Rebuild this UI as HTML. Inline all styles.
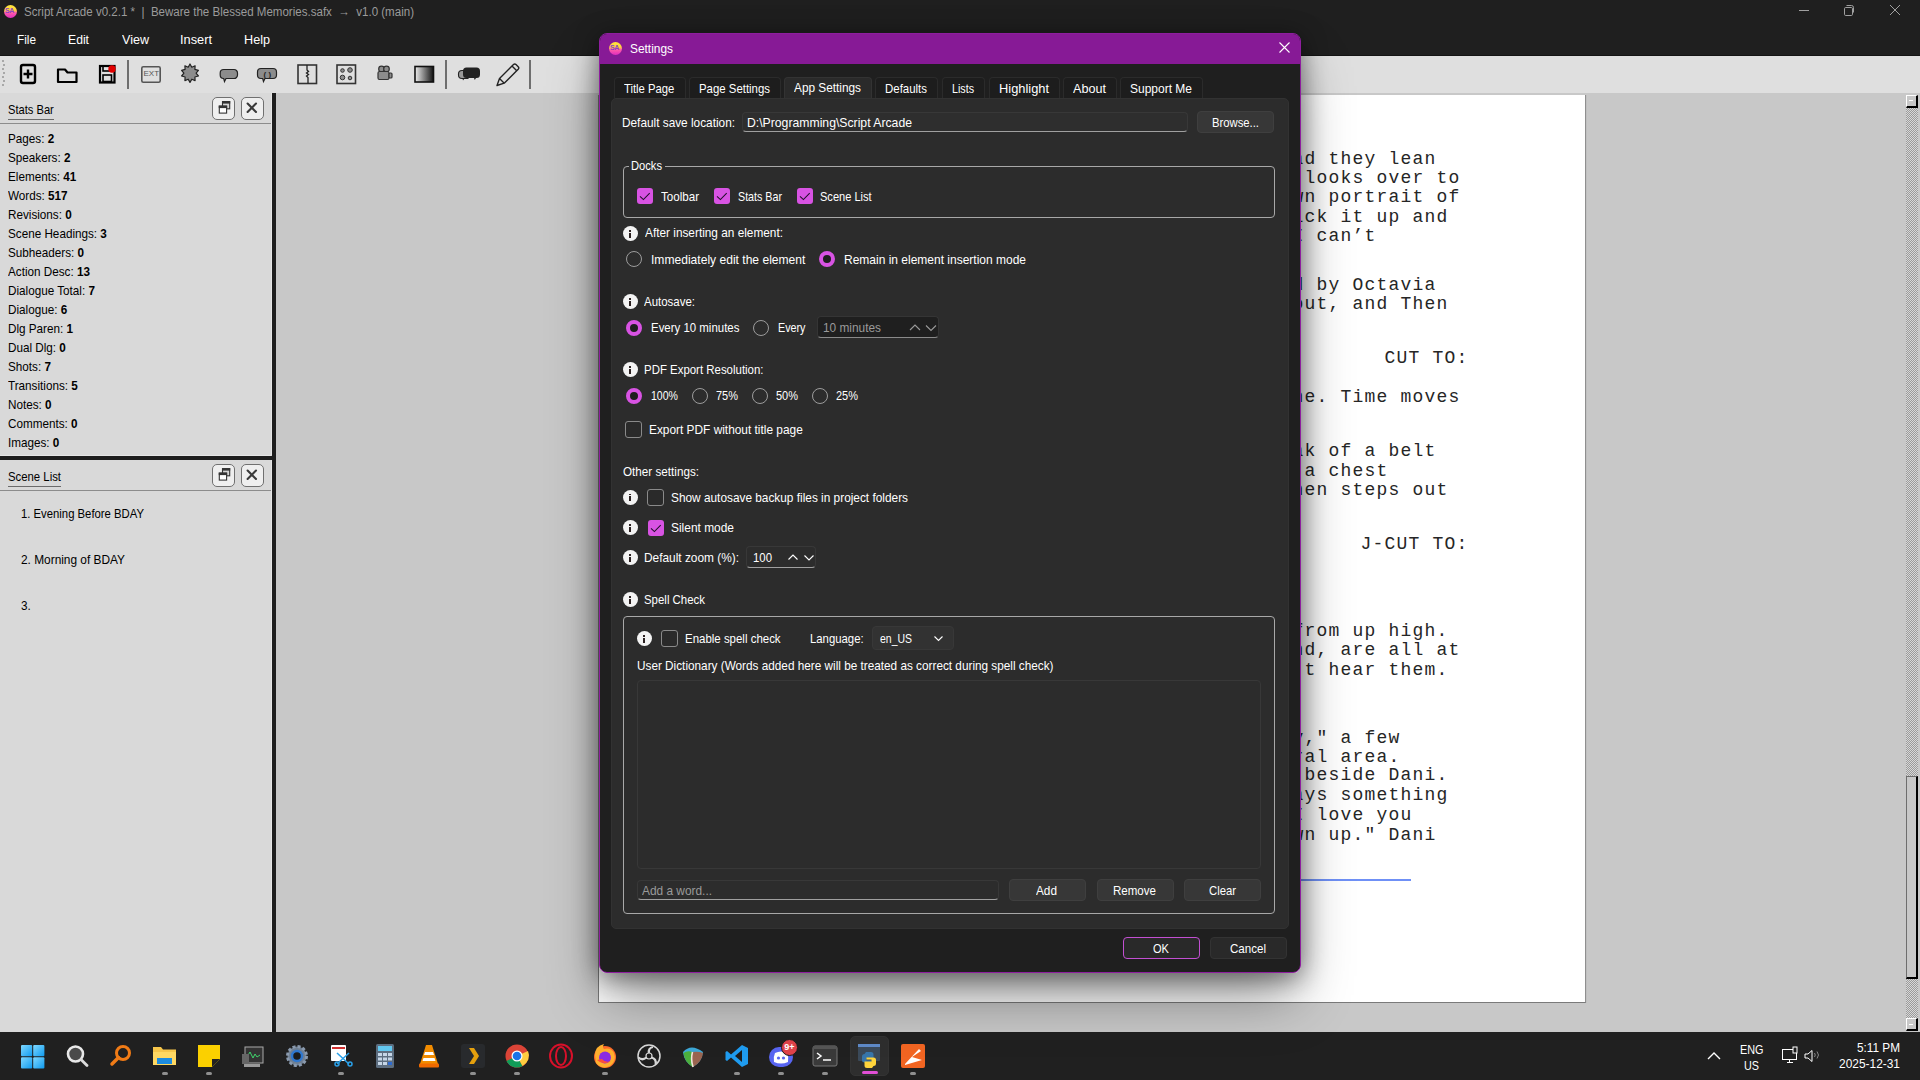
<!DOCTYPE html>
<html><head><meta charset="utf-8">
<style>
*{box-sizing:border-box;margin:0;padding:0}
html,body{width:1920px;height:1080px;overflow:hidden;background:#c8c8c8;font-family:"Liberation Sans",sans-serif;position:relative}
.a{position:absolute}
.t{position:absolute;white-space:pre;line-height:1.117;transform-origin:0 0}
.t b{font-weight:700}
svg{position:absolute;overflow:visible}
.dockbtn{position:absolute;width:23px;height:23px;background:#efefef;border:1px solid #707070;border-radius:5px}
.cb{position:absolute;width:16px;height:16px;border-radius:3px;background:#d853e3}
.cbo{position:absolute;width:17px;height:17px;border-radius:3px;border:1px solid #8a8a8a;background:#2a2a2a}
.rd{position:absolute;width:16px;height:16px;border-radius:50%;border:1px solid #9c9c9c}
.rdc{position:absolute;width:16px;height:16px;border-radius:50%;border:4px solid #d853e3;background:#1e1e1e}
.info{position:absolute;width:15px;height:15px;border-radius:50%;background:#f3f3f3}
.info:after{content:"";position:absolute;left:6.3px;top:6.6px;width:1.6px;height:5px;background:#2a2020}
.info:before{content:"";position:absolute;left:6px;top:4.4px;width:2.2px;height:1.3px;background:#2a2020}
.btn{position:absolute;background:#373737;border:1px solid #3f3f3f;border-radius:4px}
.edit{position:absolute;background:#2e2e2e;border:1px solid #383838;border-bottom:1px solid #a0a0a0;border-radius:4px}
.grp{position:absolute;border:1px solid #a8a8a8;border-radius:4px}
.tab{position:absolute;top:77px;height:21px;background:#1d1d1d;border:1px solid #2b2b2b;border-bottom:none;border-radius:4px 4px 0 0}
.tbi{position:absolute}
.dot{position:absolute;width:6px;height:3px;border-radius:2px;background:#8f8f8f;top:1072px}
</style></head>
<body>
<!-- Title + menu bar -->
<div class="a" style="left:0;top:0;width:1920px;height:56px;background:#1f1f1f"></div>
<div class="a" style="left:0;top:55px;width:1920px;height:1px;background:#141414"></div>
<!-- app icon -->
<div class="a" style="left:4px;top:5px;width:13px;height:13px;border-radius:50%;background:linear-gradient(#ffe83c 0%,#ffd040 40%,#ff5aa8 60%,#e02cc0 100%)"></div>
<div class="a" style="left:5px;top:8px;width:11px;height:6px;font:bold 7px 'Liberation Sans';color:#8a3fc8;line-height:6px;letter-spacing:-.5px">SA</div>
<!-- window controls -->
<svg style="left:1795px;top:3px" width="120" height="16">
 <line x1="4" y1="7.5" x2="14" y2="7.5" stroke="#a0a0a0" stroke-width="1"/>
 <rect x="49.5" y="4.5" width="8" height="8" rx="1.2" fill="none" stroke="#a0a0a0" stroke-width="1"/>
 <path d="M51.5 2.5 h5 a2 2 0 0 1 2 2 v5" fill="none" stroke="#a0a0a0" stroke-width="1"/>
 <path d="M95 2 L105 12 M105 2 L95 12" stroke="#a0a0a0" stroke-width="1"/>
</svg>

<!-- Toolbar -->
<div class="a" style="left:0;top:56px;width:1920px;height:37px;background:#dfdfdf"></div>
<svg style="left:0;top:56px" width="560" height="37">
 <g fill="#a8a8a8"><rect x="2" y="4" width="2" height="2"/><rect x="3" y="8" width="2" height="2"/><rect x="2" y="12" width="2" height="2"/><rect x="3" y="16" width="2" height="2"/><rect x="2" y="20" width="2" height="2"/><rect x="3" y="24" width="2" height="2"/><rect x="2" y="28" width="2" height="2"/></g>
 <!-- new -->
 <rect x="21" y="9" width="14" height="18" rx="2" fill="none" stroke="#000" stroke-width="2.4"/>
 <path d="M28 13.5v9M23.5 18h9" stroke="#000" stroke-width="2.4"/>
 <!-- open -->
 <path d="M58 13.5 h7 l2.5 3 h9 v9.5 h-18.5z" fill="none" stroke="#000" stroke-width="2.2" stroke-linejoin="round"/>
 <!-- save -->
 <rect x="100" y="10" width="14.5" height="16.5" fill="none" stroke="#000" stroke-width="2.2"/>
 <rect x="103" y="10" width="8" height="5" fill="none" stroke="#000" stroke-width="1.6"/>
 <rect x="103" y="19" width="8.5" height="6.5" fill="none" stroke="#000" stroke-width="1.6"/>
 <circle cx="112" cy="13" r="3.7" fill="#e00000"/>
 <!-- sep -->
 <rect x="127" y="4" width="2" height="29" fill="#6e6e6e"/>
 <!-- EXT -->
 <rect x="141.8" y="10.8" width="18.4" height="15.4" rx="1.5" fill="none" stroke="#555" stroke-width="1.6"/>
 <text x="143.5" y="19.5" font-family="Liberation Sans" font-size="8" fill="#555">EXT</text>
 <!-- starburst -->
 <path d="M190 8 l1.8 3.2 3.3-1.4 -.2 3.6 3.5 1 -2.3 2.8 2.3 2.8 -3.5 1 .2 3.6 -3.3-1.4 -1.8 3.2 -1.8-3.2 -3.3 1.4 .2-3.6 -3.5-1 2.3-2.8 -2.3-2.8 3.5-1 -.2-3.6 3.3 1.4z" fill="#8c8c8c" stroke="#222" stroke-width="1.2" stroke-linejoin="round"/>
 <!-- bubble -->
 <path d="M224 13.5 h10 a3.5 3.5 0 0 1 3.5 3.5 v2 a3.5 3.5 0 0 1 -3.5 3.5 h-8 l-1.5 3 -.8-3 h-.2 a3.5 3.5 0 0 1 -3.3-3.5 v-2 a3.5 3.5 0 0 1 3.5-3.5z" fill="#8c8c8c" stroke="#222" stroke-width="1.2"/>
 <!-- bubble () -->
 <path d="M261 12.5 h12 a3.5 3.5 0 0 1 3.5 3.5 v3 a3.5 3.5 0 0 1 -3.5 3.5 h-8 l-1.5 3 -.8-3 h-1.7 a3.5 3.5 0 0 1 -3.5-3.5 v-3 a3.5 3.5 0 0 1 3.5-3.5z" fill="#8c8c8c" stroke="#222" stroke-width="1.2"/>
 <text x="263.5" y="20.5" font-family="Liberation Sans" font-size="8" font-weight="bold" fill="#222">( )</text>
 <!-- split -->
 <rect x="298" y="9" width="18.5" height="18.5" fill="none" stroke="#333" stroke-width="1.6"/>
 <path d="M307 9 v5 l1.5 1.5 -2 1.5 2 1.5 -2 1.5 1.5 1.5 v6" fill="none" stroke="#222" stroke-width="1.3"/>
 <!-- dots -->
 <rect x="337" y="9" width="18.5" height="18.5" fill="none" stroke="#333" stroke-width="1.6"/>
 <circle cx="342.5" cy="14.5" r="1.8" fill="#8c8c8c" stroke="#333" stroke-width="1"/>
 <circle cx="350" cy="14" r="2.3" fill="#8c8c8c" stroke="#333" stroke-width="1"/>
 <circle cx="342.5" cy="21.5" r="2.3" fill="#8c8c8c" stroke="#333" stroke-width="1"/>
 <circle cx="350" cy="22" r="1.8" fill="#8c8c8c" stroke="#333" stroke-width="1"/>
 <!-- camera -->
 <circle cx="381.5" cy="13" r="2.8" fill="#8c8c8c" stroke="#333" stroke-width="1.2"/>
 <circle cx="386.5" cy="13" r="2.8" fill="#8c8c8c" stroke="#333" stroke-width="1.2"/>
 <rect x="378" y="15.5" width="11" height="8" rx="1.5" fill="#8c8c8c" stroke="#333" stroke-width="1.2"/>
 <rect x="389" y="17" width="3" height="5" rx="1" fill="#8c8c8c" stroke="#333" stroke-width="1.2"/>
 <!-- gradient -->
 <defs><linearGradient id="gr" x1="0" x2="1"><stop offset="0" stop-color="#eee"/><stop offset="1" stop-color="#111"/></linearGradient></defs>
 <rect x="415" y="10.5" width="18.5" height="15.5" fill="url(#gr)" stroke="#111" stroke-width="1.6"/>
 <!-- sep -->
 <rect x="445" y="4" width="2" height="29" fill="#6e6e6e"/>
 <!-- double bubble -->
 <path d="M462 14.5 h6 v8 h-6 a3.5 3.5 0 0 1 -3.5-3.5 v-1 a3.5 3.5 0 0 1 3.5-3.5z" fill="#9a9a9a" stroke="#222" stroke-width="1.1"/>
 <path d="M466.5 11.5 h10 a3.5 3.5 0 0 1 3.5 3.5 v3.5 a3.5 3.5 0 0 1 -3.5 3.5 h-10 a3.5 3.5 0 0 1 -3.5-3.5 v-3.5 a3.5 3.5 0 0 1 3.5-3.5z" fill="#222"/>
 <path d="M462.5 22.5 l.5 2 1.5-2z M474 22 l.8 2 1.2-2z" fill="#222"/>
 <!-- pencil -->
 <path d="M497 29.5 l2.5-7 14-14 a1.8 1.8 0 0 1 2.5 0 l2.2 2.2 a1.8 1.8 0 0 1 0 2.5 l-14 14z M499.5 22.5 l4.5 4.5 M512 10 l4.5 4.5" fill="none" stroke="#222" stroke-width="1.4" stroke-linejoin="round"/>
 <!-- sep -->
 <rect x="529" y="4" width="2" height="29" fill="#6e6e6e"/>
</svg>

<!-- Center area + page -->
<div class="a" style="left:598px;top:95px;width:988px;height:908px;background:#fff;border-left:1px solid #7a7a7a;border-bottom:1px solid #7a7a7a;border-right:1px solid #8f8f8f"></div>
<div class="a" style="left:1586px;top:95px;width:1px;height:908px;background:#c0c0c0"></div>
<div class="t" style="left:1292.6px;top:149.00px;font-size:18.00px;color:#262626;font-family:&quot;Liberation Mono&quot;, monospace;letter-spacing:1.2px">ad they lean</div>
<div class="t" style="left:1292.6px;top:168.00px;font-size:18.00px;color:#262626;font-family:&quot;Liberation Mono&quot;, monospace;letter-spacing:1.2px"> looks over to</div>
<div class="t" style="left:1292.6px;top:187.00px;font-size:18.00px;color:#262626;font-family:&quot;Liberation Mono&quot;, monospace;letter-spacing:1.2px">wn portrait of</div>
<div class="t" style="left:1292.6px;top:207.00px;font-size:18.00px;color:#262626;font-family:&quot;Liberation Mono&quot;, monospace;letter-spacing:1.2px">ick it up and</div>
<div class="t" style="left:1292.6px;top:226.00px;font-size:18.00px;color:#262626;font-family:&quot;Liberation Mono&quot;, monospace;letter-spacing:1.2px">I can’t</div>
<div class="t" style="left:1292.6px;top:275.00px;font-size:18.00px;color:#262626;font-family:&quot;Liberation Mono&quot;, monospace;letter-spacing:1.2px">d by Octavia</div>
<div class="t" style="left:1292.6px;top:294.00px;font-size:18.00px;color:#262626;font-family:&quot;Liberation Mono&quot;, monospace;letter-spacing:1.2px">out, and Then</div>
<div class="t" style="left:1292.6px;top:387.00px;font-size:18.00px;color:#262626;font-family:&quot;Liberation Mono&quot;, monospace;letter-spacing:1.2px">ne. Time moves</div>
<div class="t" style="left:1292.6px;top:441.00px;font-size:18.00px;color:#262626;font-family:&quot;Liberation Mono&quot;, monospace;letter-spacing:1.2px">ak of a belt</div>
<div class="t" style="left:1292.6px;top:461.00px;font-size:18.00px;color:#262626;font-family:&quot;Liberation Mono&quot;, monospace;letter-spacing:1.2px"> a chest</div>
<div class="t" style="left:1292.6px;top:480.00px;font-size:18.00px;color:#262626;font-family:&quot;Liberation Mono&quot;, monospace;letter-spacing:1.2px">hen steps out</div>
<div class="t" style="left:1292.6px;top:621.00px;font-size:18.00px;color:#262626;font-family:&quot;Liberation Mono&quot;, monospace;letter-spacing:1.2px">from up high.</div>
<div class="t" style="left:1292.6px;top:640.00px;font-size:18.00px;color:#262626;font-family:&quot;Liberation Mono&quot;, monospace;letter-spacing:1.2px">nd, are all at</div>
<div class="t" style="left:1292.6px;top:660.00px;font-size:18.00px;color:#262626;font-family:&quot;Liberation Mono&quot;, monospace;letter-spacing:1.2px">’t hear them.</div>
<div class="t" style="left:1292.6px;top:728.00px;font-size:18.00px;color:#262626;font-family:&quot;Liberation Mono&quot;, monospace;letter-spacing:1.2px">y,&quot; a few</div>
<div class="t" style="left:1292.6px;top:747.00px;font-size:18.00px;color:#262626;font-family:&quot;Liberation Mono&quot;, monospace;letter-spacing:1.2px">ral area.</div>
<div class="t" style="left:1292.6px;top:765.00px;font-size:18.00px;color:#262626;font-family:&quot;Liberation Mono&quot;, monospace;letter-spacing:1.2px"> beside Dani.</div>
<div class="t" style="left:1292.6px;top:785.00px;font-size:18.00px;color:#262626;font-family:&quot;Liberation Mono&quot;, monospace;letter-spacing:1.2px">ays something</div>
<div class="t" style="left:1292.6px;top:805.00px;font-size:18.00px;color:#262626;font-family:&quot;Liberation Mono&quot;, monospace;letter-spacing:1.2px">I love you</div>
<div class="t" style="left:1292.6px;top:825.00px;font-size:18.00px;color:#262626;font-family:&quot;Liberation Mono&quot;, monospace;letter-spacing:1.2px">wn up.&quot; Dani</div>
<div class="t" style="left:1384.6px;top:348.00px;font-size:18.00px;color:#262626;font-family:&quot;Liberation Mono&quot;, monospace;letter-spacing:1.2px">CUT TO:</div>
<div class="t" style="left:1360.6px;top:534.00px;font-size:18.00px;color:#262626;font-family:&quot;Liberation Mono&quot;, monospace;letter-spacing:1.2px">J-CUT TO:</div>
<div class="a" style="left:1300px;top:879px;width:111px;height:2px;background:#6f90f6"></div>
<!-- scrollbar -->
<div class="a" style="left:1906px;top:108px;width:12px;height:910px;background-image:repeating-conic-gradient(#9a9a9a 0 25%,#d8d8d8 0 50%);background-size:2px 2px"></div>
<div class="a" style="left:1906px;top:95px;width:12px;height:13px;background:#c8c8c8;border:1px solid #fff;border-right:2px solid #000;border-bottom:2px solid #000"></div>
<div class="a" style="left:1909px;top:100px;width:4px;height:1px;background:#fff"></div>
<div class="a" style="left:1906px;top:776px;width:12px;height:203px;background:#c8c8c8;border:1px solid #6e6e6e;border-right:2px solid #000;border-bottom:2px solid #000"></div>
<div class="a" style="left:1906px;top:1018px;width:12px;height:13px;background:#c8c8c8;border:1px solid #fff;border-right:2px solid #000;border-bottom:2px solid #000"></div>
<div class="a" style="left:1909px;top:1024px;width:4px;height:1px;background:#fff"></div>

<!-- Left dock -->
<div class="a" style="left:0;top:93px;width:272px;height:939px;background:#d9d9d9"></div>
<div class="a" style="left:8px;top:119px;width:46px;height:1px;background:#6a6a6a"></div>
<div class="a" style="left:0;top:123px;width:272px;height:1px;background:#8c8c8c"></div>
<div class="dockbtn" style="left:212px;top:97px"></div>
<div class="dockbtn" style="left:241px;top:97px"></div>
<svg style="left:212px;top:97px" width="60" height="24">
 <rect x="10.5" y="4.6" width="7.2" height="7.2" fill="#d4d4d4" stroke="#333" stroke-width="1.1"/>
 <rect x="10" y="4" width="8.2" height="2.6" fill="#333"/>
 <rect x="7.3" y="9.1" width="7.3" height="7" fill="#fff" stroke="#333" stroke-width="1.1"/>
 <rect x="6.75" y="8.6" width="8.4" height="2.5" fill="#333"/>
 <path d="M35.6 6.6 L44 15 M44 6.6 L35.6 15" stroke="#3a3a3a" stroke-width="2.1" stroke-linecap="round"/>
</svg>
<div class="a" style="left:0;top:456px;width:272px;height:4px;background:#1e1e1e"></div>
<div class="a" style="left:8px;top:486px;width:53px;height:1px;background:#6a6a6a"></div>
<div class="a" style="left:0;top:490px;width:272px;height:1px;background:#8c8c8c"></div>
<div class="dockbtn" style="left:212px;top:464px"></div>
<div class="dockbtn" style="left:241px;top:464px"></div>
<svg style="left:212px;top:464px" width="60" height="24">
 <rect x="10.5" y="4.6" width="7.2" height="7.2" fill="#d4d4d4" stroke="#333" stroke-width="1.1"/>
 <rect x="10" y="4" width="8.2" height="2.6" fill="#333"/>
 <rect x="7.3" y="9.1" width="7.3" height="7" fill="#fff" stroke="#333" stroke-width="1.1"/>
 <rect x="6.75" y="8.6" width="8.4" height="2.5" fill="#333"/>
 <path d="M35.6 6.6 L44 15 M44 6.6 L35.6 15" stroke="#3a3a3a" stroke-width="2.1" stroke-linecap="round"/>
</svg>
<div class="a" style="left:271px;top:93px;width:1px;height:362px;background:#e6e6e6"></div>
<div class="a" style="left:271px;top:460px;width:1px;height:572px;background:#e6e6e6"></div>
<div class="a" style="left:0;top:455px;width:271px;height:1px;background:#e6e6e6"></div>
<div class="a" style="left:272px;top:93px;width:4px;height:939px;background:#1e1e1e"></div>

<!-- Taskbar -->
<div class="a" style="left:0;top:1032px;width:1920px;height:48px;background:#202020"></div>
<svg style="left:21px;top:1045px" width="24" height="24"><defs><linearGradient id="ws" x1="0" y1="0" x2="1" y2="1"><stop offset="0" stop-color="#7fd8ff"/><stop offset="1" stop-color="#0f9bf0"/></linearGradient></defs><rect x="0" y="0" width="11.2" height="11.2" rx="1" fill="url(#ws)"/><rect x="12.2" y="0" width="11.2" height="11.2" rx="1" fill="url(#ws)"/><rect x="0" y="12.2" width="11.2" height="11.2" rx="1" fill="url(#ws)"/><rect x="12.2" y="12.2" width="11.2" height="11.2" rx="1" fill="url(#ws)"/></svg>
<svg style="left:66px;top:1045px" width="24" height="24"><circle cx="9.5" cy="9" r="7.5" fill="#4a4a4a" stroke="#e8e8e8" stroke-width="2.6"/><path d="M15 14.5 L21 20.5" stroke="#dcdcdc" stroke-width="2.8" stroke-linecap="round"/></svg>
<svg style="left:109px;top:1044px" width="24" height="24"><circle cx="14" cy="9" r="6.5" fill="none" stroke="#f07b16" stroke-width="3"/><path d="M9.5 13.5 L3 20" stroke="#f07b16" stroke-width="3.5" stroke-linecap="round"/></svg>
<svg style="left:152px;top:1044px" width="26" height="24"><path d="M1 3 h8 l2 2.5 h13 v15.5 h-23z" fill="#f7c64a"/><rect x="1" y="8" width="23" height="13" fill="#ffd862"/><rect x="5" y="14" width="15" height="6" fill="#1d8ce0"/></svg>
<svg style="left:197px;top:1044px" width="24" height="24"><path d="M1 1 h22 v14 l-8 8 h-14z" fill="#fbd000"/><path d="M23 15 l-8 8 v-8z" fill="#222"/></svg>
<svg style="left:241px;top:1045px" width="24" height="24"><rect x="4" y="2" width="18" height="16" fill="#333" stroke="#aaa" stroke-width="1"/><path d="M6 12 l3-5 3 6 2-4 2 3 3-2" fill="none" stroke="#3fd36b" stroke-width="1"/><rect x="1" y="9" width="7" height="10" fill="#666"/><rect x="3" y="19" width="16" height="3" fill="#999"/></svg>
<svg style="left:285px;top:1044px" width="24" height="24"><circle cx="12" cy="12" r="9.5" fill="#6f7f92" stroke="#8a9aae" stroke-width="3" stroke-dasharray="3 2"/><circle cx="12" cy="12" r="5" fill="#1c1c1c" stroke="#2f78d0" stroke-width="2.5"/></svg>
<svg style="left:329px;top:1044px" width="26" height="24"><rect x="2" y="1" width="15" height="16" rx="1" fill="#fff"/><rect x="3" y="3" width="13" height="2" fill="#d03030"/><path d="M8 9 L20 20 M20 9 L8 20" stroke="#2aa0e8" stroke-width="1.6"/><circle cx="8" cy="20" r="2" fill="none" stroke="#2aa0e8" stroke-width="1.5"/><circle cx="21" cy="20" r="2" fill="none" stroke="#2aa0e8" stroke-width="1.5"/></svg>
<svg style="left:375px;top:1044px" width="20" height="24"><rect x="1" y="0" width="18" height="24" rx="1.5" fill="#5d6e80"/><rect x="3" y="2" width="14" height="5" fill="#62c8f0"/><g fill="#c6d6e6"><rect x="3" y="9" width="4" height="3"/><rect x="8" y="9" width="4" height="3"/><rect x="13" y="9" width="4" height="3"/><rect x="3" y="13.5" width="4" height="3"/><rect x="8" y="13.5" width="4" height="3"/><rect x="13" y="13.5" width="4" height="3"/><rect x="3" y="18" width="4" height="3"/><rect x="8" y="18" width="4" height="3"/><rect x="13" y="18" width="4" height="3" fill="#2f6bd0"/></g></svg>
<svg style="left:417px;top:1044px" width="24" height="24"><path d="M9 1 h6 l6 19 h-18z" fill="#f28c00"/><path d="M8 8 h8 l1 3 h-10z M6.5 14 h11 l1 3 h-13z" fill="#fff"/><rect x="2" y="19.5" width="20" height="4" rx="1" fill="#f06a00"/></svg>
<svg style="left:461px;top:1044px" width="24" height="24"><rect x="0" y="0" width="24" height="24" rx="3" fill="#282a2d"/><path d="M8 4 h5 l5 8 -5 8 h-5 l5-8z" fill="#e5a00d"/></svg>
<svg style="left:505px;top:1044px" width="24" height="24"><circle cx="12" cy="12" r="11.5" fill="#db4437"/><path d="M12 12 L1.5 17 A11.5 11.5 0 0 0 17.5 22z" fill="#0f9d58"/><path d="M12 12 L17.5 22 A11.5 11.5 0 0 0 23 7z" fill="#ffcd40"/><circle cx="12" cy="12" r="5.5" fill="#fff"/><circle cx="12" cy="12" r="4.3" fill="#1a73e8"/></svg>
<svg style="left:549px;top:1044px" width="24" height="24"><ellipse cx="12" cy="12" rx="11" ry="11.5" fill="none" stroke="#d8102a" stroke-width="2"/><ellipse cx="12" cy="12" rx="5" ry="9" fill="none" stroke="#d8102a" stroke-width="2"/></svg>
<svg style="left:593px;top:1043px" width="24" height="26"><circle cx="12" cy="14" r="11" fill="#ff6a2b"/><path d="M2 12 q0-9 9-11 q-2 3 0 5 q7 -2 10 4 q3 8 -4 13 q-8 4 -14-3z" fill="#ffb02e"/><circle cx="12" cy="14.5" r="6" fill="#8a2be2"/><path d="M4 17 q6 6 14 1 q-6 2 -9-2z" fill="#ff4f3a"/></svg>
<svg style="left:637px;top:1044px" width="24" height="24"><circle cx="12" cy="12" r="11" fill="#1e1e1e" stroke="#d8d8d8" stroke-width="1.5"/><circle cx="12" cy="12" r="3" fill="none" stroke="#d8d8d8" stroke-width="1.2"/><path d="M12 9 q-1-5 4-6 M14.6 13.5 q5 1.5 4 6.5 M9.4 13.5 q-4 3.5 -8 0" fill="none" stroke="#d8d8d8" stroke-width="2.2"/></svg>
<svg style="left:681px;top:1044px" width="24" height="24"><path d="M2 8 q8-9 20 0 q-1 10 -10 15 q-9-5 -10-15z" fill="#3da9d8"/><path d="M2.5 9 q4-3 9-1 q-3 5 0 15 q-8-5 -9-14z" fill="#4caf3d"/><path d="M11.5 8 q6-1 10.5 1 q-1 9 -10 14 q-3-8 -0.5-15z" fill="#9a6550"/><path d="M11.5 8 q-2 7 0.5 15" stroke="#f0e6d8" stroke-width="1.6" fill="none"/></svg>
<svg style="left:725px;top:1044px" width="24" height="24"><path d="M17 1 L23 4 v16 L17 23 L6 13.5 L2 17 L0.5 16 v-8 L2 7 L6 10.5z" fill="#1f9cf0"/><path d="M17 6 v12 l-7-6z" fill="#1c1c1c"/></svg>
<svg style="left:769px;top:1045px" width="30" height="24"><rect x="0" y="2" width="24" height="20" rx="10" fill="#5865f2"/><path d="M6 8 q6-3 12 0 q2 4 1 9 q-7 3 -14 0 q-1-5 1-9z" fill="#fff"/><circle cx="9.5" cy="13" r="1.6" fill="#5865f2"/><circle cx="14.5" cy="13" r="1.6" fill="#5865f2"/></svg>
<div class="a" style="left:781px;top:1039px;width:17px;height:17px;border-radius:50%;background:#e0424a;border:1.5px solid #1c1c1c;font:bold 9px 'Liberation Sans';color:#fff;text-align:center;line-height:14px">9+</div>
<svg style="left:813px;top:1045px" width="24" height="22"><rect x="0" y="1" width="24" height="20" rx="2" fill="#3a3a3a" stroke="#777" stroke-width="1"/><rect x="0" y="1" width="24" height="3" fill="#555"/><path d="M4 8 l4 3 -4 3" fill="none" stroke="#fff" stroke-width="1.5"/><path d="M10 15 h8" stroke="#fff" stroke-width="1.5"/></svg>
<div class="a" style="left:850px;top:1036px;width:39px;height:40px;border-radius:5px;background:#2e2e2e;border:1px solid #333"></div>
<svg style="left:857px;top:1044px" width="24" height="24"><rect x="1" y="0" width="22" height="17" rx="1" fill="#3b4a5a"/><rect x="1" y="0" width="22" height="3" fill="#5f8ac8"/><path d="M9 8 h5 a2.5 2.5 0 0 1 2.5 2.5 v4 h-7 v2 h5 v2 h-7 a2.5 2.5 0 0 1 -2.5-2.5 v-3.5 a2.5 2.5 0 0 1 2.5-2.5z" fill="#3776ab"/><path d="M15 24 h-5 a2.5 2.5 0 0 1 -2.5-2.5 v-4 h7 v-2 h-5 v-2 h7 a2.5 2.5 0 0 1 2.5 2.5 v3.5 a2.5 2.5 0 0 1 -2.5 2.5z" fill="#ffd43b"/></svg>
<div class="a" style="left:862px;top:1071px;width:16px;height:3px;border-radius:2px;background:#e24fd6"></div>
<svg style="left:901px;top:1044px" width="24" height="24"><rect x="0" y="0" width="24" height="24" rx="2" fill="#f26522"/><path d="M4 20 L18 5 l2 2 -9 6 10 3 -17 5z" fill="#fff"/></svg>
<div class="dot" style="left:162px"></div>
<div class="dot" style="left:206px"></div>
<div class="dot" style="left:338px"></div>
<div class="dot" style="left:470px"></div>
<div class="dot" style="left:514px"></div>
<div class="dot" style="left:602px"></div>
<div class="dot" style="left:734px"></div>
<div class="dot" style="left:778px"></div>
<div class="dot" style="left:822px"></div>
<div class="dot" style="left:910px"></div>
<svg style="left:1706px;top:1050px" width="16" height="12"><path d="M2 9 L8 3 L14 9" fill="none" stroke="#fff" stroke-width="1.4"/></svg>
<svg style="left:1780px;top:1046px" width="46" height="20"><rect x="2.5" y="3.5" width="14" height="10" fill="none" stroke="#fff" stroke-width="1"/><path d="M7 16.5 h6 M9.5 13.5 v3" stroke="#fff" stroke-width="1"/><rect x="13" y="1" width="4" height="6" fill="#1c1c1c" stroke="#fff" stroke-width="1"/><path d="M25 8 h3 l4-3.5 v11 l-4-3.5 h-3z" fill="none" stroke="#fff" stroke-width="1"/><path d="M34.5 7 q1.5 2 0 4 M37 5.5 q3 3.5 0 7" fill="none" stroke="#888" stroke-width="1"/></svg>

<!-- Dialog -->
<div class="a" style="left:599px;top:33px;width:702px;height:940px;border-radius:8px;box-shadow:0 4px 26px 0 rgba(0,0,0,.48),0 28px 56px -6px rgba(0,0,0,.42)"></div>
<div class="a" style="left:599px;top:33px;width:702px;height:940px;background:#1f1f1f;border:1px solid #8e1e9e;border-radius:8px;overflow:hidden">
 <div class="a" style="left:0;top:0;width:700px;height:30px;background:#871a96"></div>
</div>
<!-- dialog icon + close -->
<div class="a" style="left:609px;top:42px;width:13px;height:13px;border-radius:50%;background:linear-gradient(#ffe83c 0%,#ffd040 40%,#ff5aa8 60%,#e02cc0 100%)"></div>
<div class="a" style="left:610px;top:45px;width:11px;height:6px;font:bold 7px 'Liberation Sans';color:#8a3fc8;line-height:6px;letter-spacing:-.5px">SA</div>
<svg style="left:1279px;top:42px" width="12" height="12"><path d="M.5 .5 L10.5 10.5 M10.5 .5 L.5 10.5" stroke="#fff" stroke-width="1.1"/></svg>

<!-- tabs -->
<div class="tab" style="left:613.5px;width:72px"></div>
<div class="tab" style="left:688.5px;width:92px"></div>
<div class="tab" style="left:783.5px;width:88px;background:#2a2a2a;border-color:#333"></div>
<div class="tab" style="left:874.5px;width:63.5px"></div>
<div class="tab" style="left:941.5px;width:43.5px"></div>
<div class="tab" style="left:988.5px;width:71px"></div>
<div class="tab" style="left:1062.5px;width:54px"></div>
<div class="tab" style="left:1119.5px;width:83px"></div>
<!-- tab pane -->
<div class="a" style="left:611px;top:98px;width:678px;height:831px;background:#2c2c2c;border:1px solid #323232;border-radius:5px"></div>

<div class="edit" style="left:742px;top:112px;width:446px;height:20px"></div>
<div class="btn" style="left:1197px;top:111px;width:77px;height:22px"></div>

<div class="grp" style="left:623px;top:166px;width:652px;height:52px"></div>
<div class="a" style="left:629px;top:160px;width:36px;height:10px;background:#2c2c2c"></div>
<div class="cb" style="left:637px;top:188px"></div><svg style="left:637px;top:188px" width="16" height="16"><path d="M3 8.3 L6.4 11.6 L12.7 5.2" fill="none" stroke="#20102a" stroke-width="1.05"/></svg>
<div class="cb" style="left:714px;top:188px"></div><svg style="left:714px;top:188px" width="16" height="16"><path d="M3 8.3 L6.4 11.6 L12.7 5.2" fill="none" stroke="#20102a" stroke-width="1.05"/></svg>
<div class="cb" style="left:797px;top:188px"></div><svg style="left:797px;top:188px" width="16" height="16"><path d="M3 8.3 L6.4 11.6 L12.7 5.2" fill="none" stroke="#20102a" stroke-width="1.05"/></svg>
<div class="info" style="left:623px;top:226px"></div>
<div class="rd" style="left:626px;top:251px"></div>
<div class="rdc" style="left:819px;top:251px"></div>
<div class="info" style="left:623px;top:294px"></div>
<div class="rdc" style="left:626px;top:319.5px"></div>
<div class="rd" style="left:753px;top:319.5px"></div>
<div class="a" style="left:817px;top:316px;width:122px;height:22px;background:#1f1f1f;border:1px solid #353535;border-bottom:1px solid #8a8a8a;border-radius:4px"></div>
<svg style="left:906px;top:322px" width="34" height="12"><path d="M4 8 L9 3 L14 8 M20 3.5 L25 8.5 L30 3.5" fill="none" stroke="#9a9a9a" stroke-width="1.1"/></svg>
<div class="info" style="left:623px;top:362px"></div>
<div class="rdc" style="left:626px;top:387.5px"></div>
<div class="rd" style="left:692px;top:387.5px"></div>
<div class="rd" style="left:752px;top:387.5px"></div>
<div class="rd" style="left:812px;top:387.5px"></div>
<div class="cbo" style="left:625px;top:421px"></div>
<div class="info" style="left:623px;top:489.5px"></div>
<div class="cbo" style="left:647px;top:489px"></div>
<div class="info" style="left:623px;top:520px"></div>
<div class="cb" style="left:648px;top:519.5px"></div><svg style="left:648px;top:519.5px" width="16" height="16"><path d="M3 8.3 L6.4 11.6 L12.7 5.2" fill="none" stroke="#20102a" stroke-width="1.05"/></svg>
<div class="info" style="left:623px;top:550px"></div>
<div class="edit" style="left:746px;top:546px;width:70px;height:22px;background:#2c2c2c"></div>
<svg style="left:786px;top:552px" width="30" height="10"><path d="M2.5 7.5 L7 3 L11.5 7.5 M18.5 3.5 L23 8 L27.5 3.5" fill="none" stroke="#fff" stroke-width="1.1"/></svg>
<div class="info" style="left:623px;top:592px"></div>
<div class="grp" style="left:623px;top:616px;width:652px;height:298px;"></div>
<div class="info" style="left:637px;top:631px"></div>
<div class="cbo" style="left:661px;top:630px"></div>
<div class="a" style="left:872px;top:626px;width:82px;height:24px;background:#323232;border:1px solid #383838;border-radius:4px"></div>
<svg style="left:933px;top:635px" width="12" height="8"><path d="M1.5 1.5 L5.5 5.5 L9.5 1.5" fill="none" stroke="#fff" stroke-width="1.1"/></svg>
<div class="a" style="left:637px;top:680px;width:624px;height:189px;background:#2c2c2c;border:1px solid #383838;border-radius:4px"></div>
<div class="edit" style="left:637px;top:880px;width:362px;height:20px;background:#2c2c2c"></div>
<div class="btn" style="left:1008.5px;top:879px;width:77px;height:22px;"></div>
<div class="btn" style="left:1096.5px;top:879px;width:77px;height:22px;"></div>
<div class="btn" style="left:1183.5px;top:879px;width:77px;height:22px;"></div>
<div class="a" style="left:1122.5px;top:937px;width:77.5px;height:22px;background:#292929;border:1px solid #c24fd2;border-radius:4px"></div>
<div class="a" style="left:1210px;top:937px;width:77px;height:22px;background:#292929;border:1px solid #333;border-radius:4px"></div>

<div class="t" style="left:24.0px;top:6.00px;font-size:12.50px;color:#9b9b9b;font-family:&quot;Liberation Sans&quot;, sans-serif;transform:scaleX(0.9238)">Script Arcade v0.2.1 *  |  Beware the Blessed Memories.safx  →  v1.0 (main)</div>
<div class="t" style="left:16.6px;top:33.00px;font-size:13.00px;color:#ffffff;font-family:&quot;Liberation Sans&quot;, sans-serif;transform:scaleX(0.9068)">File</div>
<div class="t" style="left:68.4px;top:33.00px;font-size:13.00px;color:#ffffff;font-family:&quot;Liberation Sans&quot;, sans-serif;transform:scaleX(0.9372)">Edit</div>
<div class="t" style="left:122.0px;top:33.00px;font-size:13.00px;color:#ffffff;font-family:&quot;Liberation Sans&quot;, sans-serif;transform:scaleX(0.9659)">View</div>
<div class="t" style="left:180.0px;top:33.00px;font-size:13.00px;color:#ffffff;font-family:&quot;Liberation Sans&quot;, sans-serif;transform:scaleX(0.9841)">Insert</div>
<div class="t" style="left:244.0px;top:33.00px;font-size:13.00px;color:#ffffff;font-family:&quot;Liberation Sans&quot;, sans-serif;transform:scaleX(0.9720)">Help</div>
<div class="t" style="left:8.1px;top:103.00px;font-size:13.00px;color:#000000;font-family:&quot;Liberation Sans&quot;, sans-serif;transform:scaleX(0.8566)">Stats Bar</div>
<div class="t" style="left:8.2px;top:132.00px;font-size:13.00px;color:#000000;font-family:&quot;Liberation Sans&quot;, sans-serif;transform:scaleX(0.9000)">Pages: <b>2</b></div>
<div class="t" style="left:8.2px;top:151.00px;font-size:13.00px;color:#000000;font-family:&quot;Liberation Sans&quot;, sans-serif;transform:scaleX(0.9000)">Speakers: <b>2</b></div>
<div class="t" style="left:8.2px;top:170.00px;font-size:13.00px;color:#000000;font-family:&quot;Liberation Sans&quot;, sans-serif;transform:scaleX(0.9000)">Elements: <b>41</b></div>
<div class="t" style="left:8.2px;top:189.00px;font-size:13.00px;color:#000000;font-family:&quot;Liberation Sans&quot;, sans-serif;transform:scaleX(0.9000)">Words: <b>517</b></div>
<div class="t" style="left:8.2px;top:208.00px;font-size:13.00px;color:#000000;font-family:&quot;Liberation Sans&quot;, sans-serif;transform:scaleX(0.9000)">Revisions: <b>0</b></div>
<div class="t" style="left:8.2px;top:227.00px;font-size:13.00px;color:#000000;font-family:&quot;Liberation Sans&quot;, sans-serif;transform:scaleX(0.9000)">Scene Headings: <b>3</b></div>
<div class="t" style="left:8.2px;top:246.00px;font-size:13.00px;color:#000000;font-family:&quot;Liberation Sans&quot;, sans-serif;transform:scaleX(0.9000)">Subheaders: <b>0</b></div>
<div class="t" style="left:8.2px;top:265.00px;font-size:13.00px;color:#000000;font-family:&quot;Liberation Sans&quot;, sans-serif;transform:scaleX(0.9000)">Action Desc: <b>13</b></div>
<div class="t" style="left:8.2px;top:284.00px;font-size:13.00px;color:#000000;font-family:&quot;Liberation Sans&quot;, sans-serif;transform:scaleX(0.9000)">Dialogue Total: <b>7</b></div>
<div class="t" style="left:8.2px;top:303.00px;font-size:13.00px;color:#000000;font-family:&quot;Liberation Sans&quot;, sans-serif;transform:scaleX(0.9000)">Dialogue: <b>6</b></div>
<div class="t" style="left:8.2px;top:322.00px;font-size:13.00px;color:#000000;font-family:&quot;Liberation Sans&quot;, sans-serif;transform:scaleX(0.9000)">Dlg Paren: <b>1</b></div>
<div class="t" style="left:8.2px;top:341.00px;font-size:13.00px;color:#000000;font-family:&quot;Liberation Sans&quot;, sans-serif;transform:scaleX(0.9000)">Dual Dlg: <b>0</b></div>
<div class="t" style="left:8.2px;top:360.00px;font-size:13.00px;color:#000000;font-family:&quot;Liberation Sans&quot;, sans-serif;transform:scaleX(0.9000)">Shots: <b>7</b></div>
<div class="t" style="left:8.2px;top:379.00px;font-size:13.00px;color:#000000;font-family:&quot;Liberation Sans&quot;, sans-serif;transform:scaleX(0.9000)">Transitions: <b>5</b></div>
<div class="t" style="left:8.2px;top:398.00px;font-size:13.00px;color:#000000;font-family:&quot;Liberation Sans&quot;, sans-serif;transform:scaleX(0.9000)">Notes: <b>0</b></div>
<div class="t" style="left:8.2px;top:417.00px;font-size:13.00px;color:#000000;font-family:&quot;Liberation Sans&quot;, sans-serif;transform:scaleX(0.9000)">Comments: <b>0</b></div>
<div class="t" style="left:8.2px;top:436.00px;font-size:13.00px;color:#000000;font-family:&quot;Liberation Sans&quot;, sans-serif;transform:scaleX(0.9000)">Images: <b>0</b></div>
<div class="t" style="left:8.1px;top:470.00px;font-size:13.00px;color:#000000;font-family:&quot;Liberation Sans&quot;, sans-serif;transform:scaleX(0.8731)">Scene List</div>
<div class="t" style="left:21.0px;top:507.00px;font-size:13.00px;color:#000000;font-family:&quot;Liberation Sans&quot;, sans-serif;transform:scaleX(0.8698)">1. Evening Before BDAY</div>
<div class="t" style="left:21.0px;top:553.00px;font-size:13.00px;color:#000000;font-family:&quot;Liberation Sans&quot;, sans-serif;transform:scaleX(0.9129)">2. Morning of BDAY</div>
<div class="t" style="left:21.0px;top:599.00px;font-size:13.00px;color:#000000;font-family:&quot;Liberation Sans&quot;, sans-serif;transform:scaleX(0.9000)">3.</div>
<div class="t" style="left:630.0px;top:42.00px;font-size:13.00px;color:#ffffff;font-family:&quot;Liberation Sans&quot;, sans-serif;transform:scaleX(0.9152)">Settings</div>
<div class="t" style="left:624.3px;top:82.00px;font-size:13.00px;color:#ffffff;font-family:&quot;Liberation Sans&quot;, sans-serif;transform:scaleX(0.8680)">Title Page</div>
<div class="t" style="left:699.0px;top:82.00px;font-size:13.00px;color:#ffffff;font-family:&quot;Liberation Sans&quot;, sans-serif;transform:scaleX(0.8771)">Page Settings</div>
<div class="t" style="left:793.9px;top:81.00px;font-size:13.00px;color:#ffffff;font-family:&quot;Liberation Sans&quot;, sans-serif;transform:scaleX(0.9089)">App Settings</div>
<div class="t" style="left:885.2px;top:82.00px;font-size:13.00px;color:#ffffff;font-family:&quot;Liberation Sans&quot;, sans-serif;transform:scaleX(0.8804)">Defaults</div>
<div class="t" style="left:952.4px;top:82.00px;font-size:13.00px;color:#ffffff;font-family:&quot;Liberation Sans&quot;, sans-serif;transform:scaleX(0.8229)">Lists</div>
<div class="t" style="left:999.0px;top:82.00px;font-size:13.00px;color:#ffffff;font-family:&quot;Liberation Sans&quot;, sans-serif;transform:scaleX(0.9883)">Highlight</div>
<div class="t" style="left:1073.0px;top:82.00px;font-size:13.00px;color:#ffffff;font-family:&quot;Liberation Sans&quot;, sans-serif;transform:scaleX(0.9710)">About</div>
<div class="t" style="left:1129.9px;top:82.00px;font-size:13.00px;color:#ffffff;font-family:&quot;Liberation Sans&quot;, sans-serif;transform:scaleX(0.9226)">Support Me</div>
<div class="t" style="left:622.3px;top:116.00px;font-size:13.00px;color:#ffffff;font-family:&quot;Liberation Sans&quot;, sans-serif;transform:scaleX(0.9091)">Default save location:</div>
<div class="t" style="left:747.0px;top:116.00px;font-size:13.00px;color:#ffffff;font-family:&quot;Liberation Sans&quot;, sans-serif;transform:scaleX(0.9398)">D:\Programming\Script Arcade</div>
<div class="t" style="left:1212.0px;top:116.00px;font-size:13.00px;color:#ffffff;font-family:&quot;Liberation Sans&quot;, sans-serif;transform:scaleX(0.8674)">Browse...</div>
<div class="t" style="left:631.4px;top:159.00px;font-size:13.00px;color:#ffffff;font-family:&quot;Liberation Sans&quot;, sans-serif;transform:scaleX(0.8581)">Docks</div>
<div class="t" style="left:661.0px;top:190.00px;font-size:13.00px;color:#ffffff;font-family:&quot;Liberation Sans&quot;, sans-serif;transform:scaleX(0.8912)">Toolbar</div>
<div class="t" style="left:738.0px;top:190.00px;font-size:13.00px;color:#ffffff;font-family:&quot;Liberation Sans&quot;, sans-serif;transform:scaleX(0.8229)">Stats Bar</div>
<div class="t" style="left:820.4px;top:190.00px;font-size:13.00px;color:#ffffff;font-family:&quot;Liberation Sans&quot;, sans-serif;transform:scaleX(0.8500)">Scene List</div>
<div class="t" style="left:645.0px;top:226.00px;font-size:13.00px;color:#ffffff;font-family:&quot;Liberation Sans&quot;, sans-serif;transform:scaleX(0.9094)">After inserting an element:</div>
<div class="t" style="left:650.6px;top:253.00px;font-size:13.00px;color:#ffffff;font-family:&quot;Liberation Sans&quot;, sans-serif;transform:scaleX(0.9290)">Immediately edit the element</div>
<div class="t" style="left:843.5px;top:253.00px;font-size:13.00px;color:#ffffff;font-family:&quot;Liberation Sans&quot;, sans-serif;transform:scaleX(0.9225)">Remain in element insertion mode</div>
<div class="t" style="left:644.4px;top:295.00px;font-size:13.00px;color:#ffffff;font-family:&quot;Liberation Sans&quot;, sans-serif;transform:scaleX(0.8819)">Autosave:</div>
<div class="t" style="left:650.6px;top:321.00px;font-size:13.00px;color:#ffffff;font-family:&quot;Liberation Sans&quot;, sans-serif;transform:scaleX(0.8801)">Every 10 minutes</div>
<div class="t" style="left:777.5px;top:321.00px;font-size:13.00px;color:#ffffff;font-family:&quot;Liberation Sans&quot;, sans-serif;transform:scaleX(0.8275)">Every</div>
<div class="t" style="left:822.6px;top:321.00px;font-size:13.00px;color:#9a9a9a;font-family:&quot;Liberation Sans&quot;, sans-serif;transform:scaleX(0.9120)">10 minutes</div>
<div class="t" style="left:644.0px;top:363.00px;font-size:13.00px;color:#ffffff;font-family:&quot;Liberation Sans&quot;, sans-serif;transform:scaleX(0.8797)">PDF Export Resolution:</div>
<div class="t" style="left:650.8px;top:389.00px;font-size:13.00px;color:#ffffff;font-family:&quot;Liberation Sans&quot;, sans-serif;transform:scaleX(0.8120)">100%</div>
<div class="t" style="left:716.0px;top:389.00px;font-size:13.00px;color:#ffffff;font-family:&quot;Liberation Sans&quot;, sans-serif;transform:scaleX(0.8451)">75%</div>
<div class="t" style="left:776.0px;top:389.00px;font-size:13.00px;color:#ffffff;font-family:&quot;Liberation Sans&quot;, sans-serif;transform:scaleX(0.8451)">50%</div>
<div class="t" style="left:835.8px;top:389.00px;font-size:13.00px;color:#ffffff;font-family:&quot;Liberation Sans&quot;, sans-serif;transform:scaleX(0.8451)">25%</div>
<div class="t" style="left:649.2px;top:423.00px;font-size:13.00px;color:#ffffff;font-family:&quot;Liberation Sans&quot;, sans-serif;transform:scaleX(0.9132)">Export PDF without title page</div>
<div class="t" style="left:622.5px;top:465.00px;font-size:13.00px;color:#ffffff;font-family:&quot;Liberation Sans&quot;, sans-serif;transform:scaleX(0.8989)">Other settings:</div>
<div class="t" style="left:671.2px;top:491.00px;font-size:13.00px;color:#ffffff;font-family:&quot;Liberation Sans&quot;, sans-serif;transform:scaleX(0.9110)">Show autosave backup files in project folders</div>
<div class="t" style="left:671.0px;top:521.00px;font-size:13.00px;color:#ffffff;font-family:&quot;Liberation Sans&quot;, sans-serif;transform:scaleX(0.9176)">Silent mode</div>
<div class="t" style="left:644.0px;top:551.00px;font-size:13.00px;color:#ffffff;font-family:&quot;Liberation Sans&quot;, sans-serif;transform:scaleX(0.9131)">Default zoom (%):</div>
<div class="t" style="left:752.5px;top:551.00px;font-size:13.00px;color:#ffffff;font-family:&quot;Liberation Sans&quot;, sans-serif;transform:scaleX(0.8754)">100</div>
<div class="t" style="left:644.0px;top:593.00px;font-size:13.00px;color:#ffffff;font-family:&quot;Liberation Sans&quot;, sans-serif;transform:scaleX(0.8793)">Spell Check</div>
<div class="t" style="left:685.4px;top:632.00px;font-size:13.00px;color:#ffffff;font-family:&quot;Liberation Sans&quot;, sans-serif;transform:scaleX(0.8819)">Enable spell check</div>
<div class="t" style="left:810.4px;top:632.00px;font-size:13.00px;color:#ffffff;font-family:&quot;Liberation Sans&quot;, sans-serif;transform:scaleX(0.8722)">Language:</div>
<div class="t" style="left:880.0px;top:632.00px;font-size:13.00px;color:#ffffff;font-family:&quot;Liberation Sans&quot;, sans-serif;transform:scaleX(0.8050)">en_US</div>
<div class="t" style="left:636.5px;top:659.00px;font-size:13.00px;color:#ffffff;font-family:&quot;Liberation Sans&quot;, sans-serif;transform:scaleX(0.9054)">User Dictionary (Words added here will be treated as correct during spell check)</div>
<div class="t" style="left:642.0px;top:884.00px;font-size:13.00px;color:#9a9a9a;font-family:&quot;Liberation Sans&quot;, sans-serif;transform:scaleX(0.9137)">Add a word...</div>
<div class="t" style="left:1036.0px;top:884.00px;font-size:13.00px;color:#ffffff;font-family:&quot;Liberation Sans&quot;, sans-serif;transform:scaleX(0.9075)">Add</div>
<div class="t" style="left:1113.0px;top:884.00px;font-size:13.00px;color:#ffffff;font-family:&quot;Liberation Sans&quot;, sans-serif;transform:scaleX(0.8880)">Remove</div>
<div class="t" style="left:1208.5px;top:884.00px;font-size:13.00px;color:#ffffff;font-family:&quot;Liberation Sans&quot;, sans-serif;transform:scaleX(0.8688)">Clear</div>
<div class="t" style="left:1153.0px;top:942.00px;font-size:13.00px;color:#ffffff;font-family:&quot;Liberation Sans&quot;, sans-serif;transform:scaleX(0.8512)">OK</div>
<div class="t" style="left:1230.0px;top:942.00px;font-size:13.00px;color:#ffffff;font-family:&quot;Liberation Sans&quot;, sans-serif;transform:scaleX(0.8896)">Cancel</div>
<div class="t" style="left:1740.0px;top:1043.00px;font-size:13.00px;color:#ffffff;font-family:&quot;Liberation Sans&quot;, sans-serif;transform:scaleX(0.8342)">ENG</div>
<div class="t" style="left:1744.0px;top:1059.00px;font-size:13.00px;color:#ffffff;font-family:&quot;Liberation Sans&quot;, sans-serif;transform:scaleX(0.8304)">US</div>
<div class="t" style="left:1857.0px;top:1041.00px;font-size:13.00px;color:#ffffff;font-family:&quot;Liberation Sans&quot;, sans-serif;transform:scaleX(0.9062)">5:11 PM</div>
<div class="t" style="left:1839.0px;top:1057.00px;font-size:13.00px;color:#ffffff;font-family:&quot;Liberation Sans&quot;, sans-serif;transform:scaleX(0.9173)">2025-12-31</div>
</body></html>
